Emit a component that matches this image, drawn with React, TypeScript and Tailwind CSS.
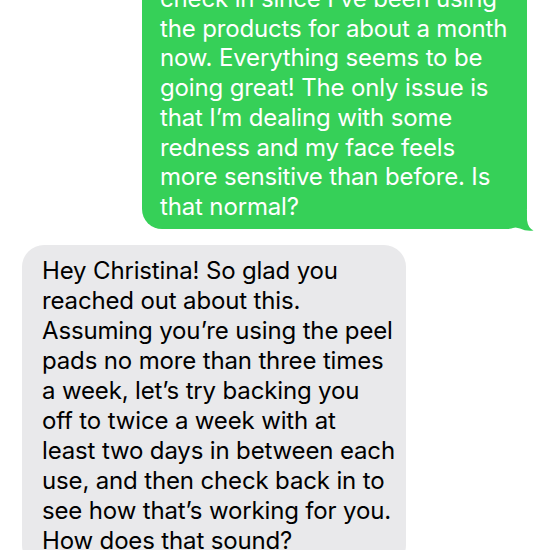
import React from "react";

const sent = [
  "check in since I’ve been using",
  "the products for about a month",
  "now. Everything seems to be",
  "going great! The only issue is",
  "that I’m dealing with some",
  "redness and my face feels",
  "more sensitive than before. Is",
  "that normal?",
];

const received = [
  "Hey Christina! So glad you",
  "reached out about this.",
  "Assuming you’re using the peel",
  "pads no more than three times",
  "a week, let’s try backing you",
  "off to twice a week with at",
  "least two days in between each",
  "use, and then check back in to",
  "see how that’s working for you.",
  "How does that sound?",
];

const App = () => {
  return (
    <div
      className="w-[550px] h-[550px] overflow-hidden bg-white flex flex-col"
      style={{ fontFamily: "Inter, 'Noto Sans', sans-serif" }}
    >
      <div className="flex justify-end pr-[23px] mt-[-24px]">
        <div className="relative w-[385px] bg-[#36d058] rounded-[20px] pl-[18px] pr-[10px] pt-[8px] pb-[7px] text-white text-[24px] leading-[29.7px] tracking-[-0.15px]">
          {sent.map((line) => (
            <div key={line} className="whitespace-nowrap">
              {line}
            </div>
          ))}
          <svg
            className="absolute right-[-7px] bottom-[-3px]"
            width="24"
            height="22"
            viewBox="0 0 24 22"
          >
            <path
              d="M0 0 H17 V10 Q18 18 23.5 20.5 Q16 21.5 10 18.5 Q6 17 0 17 Z"
              fill="#36d058"
            />
          </svg>
        </div>
      </div>

      <div className="pl-[22px] mt-[16px]">
        <div className="w-[384px] bg-[#e9e9eb] rounded-[22px] pl-[20px] pr-[10px] pt-[11px] pb-[10px] text-black text-[24px] leading-[30.1px] tracking-[-0.15px]">
          {received.map((line) => (
            <div key={line} className="whitespace-nowrap">
              {line}
            </div>
          ))}
        </div>
      </div>
    </div>
  );
};

export default App;
